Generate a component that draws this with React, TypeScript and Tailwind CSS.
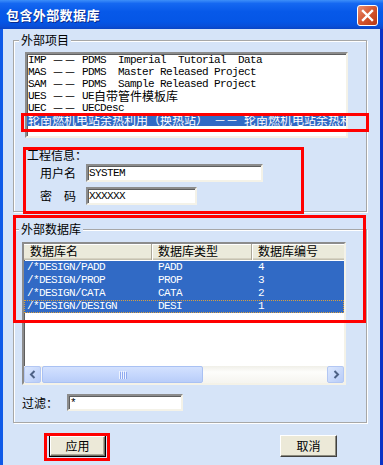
import React from 'react';

const cjk = "font-['Noto_Sans_CJK_SC','Noto_Sans',sans-serif]";
const mono = "font-['Liberation_Mono','Noto_Sans_CJK_SC',monospace] text-[11px] tracking-[-0.6px]";
const sunken =
  'border-2 border-t-[#8c8c8c] border-l-[#8c8c8c] border-b-[#f4f2e8] border-r-[#f4f2e8] shadow-[inset_1px_1px_0_#5e5e5e]';

// CJK piece inside a monospace line
const Zh = ({ children }: { children: React.ReactNode }) => (
  <span className={`${cjk} inline-block align-top h-[12px] leading-[12px] text-[12px] tracking-normal`}>
    {children}
  </span>
);

const projects: React.ReactNode[] = [
  <>IMP <Zh>－－</Zh> PDMS  Imperial  Tutorial  Data</>,
  <>MAS <Zh>－－</Zh> PDMS  Master Released Project</>,
  <>SAM <Zh>－－</Zh> PDMS  Sample Released Project</>,
  <>UES <Zh>－－</Zh> UE<Zh>自带管件模板库</Zh></>,
  <>UEC <Zh>－－</Zh> UECDesc</>,
];

const databases = [
  ['/*DESIGN/PADD', 'PADD', '4'],
  ['/*DESIGN/PROP', 'PROP', '3'],
  ['/*DESIGN/CATA', 'CATA', '2'],
  ['/*DESIGN/DESIGN', 'DESI', '1'],
];

const ScrollButton = ({ dir }: { dir: 'left' | 'right' }) => (
  <div className="w-[17px] h-[17px] shrink-0 rounded-[2px] border border-[#b3c7f3] bg-[linear-gradient(135deg,#dbe7fe,#b8ccf8)] flex items-center justify-center">
    <svg width="8" height="9" viewBox="0 0 8 9">
      <polyline
        points={dir === 'left' ? '5.5,1 2,4.5 5.5,8' : '2.5,1 6,4.5 2.5,8'}
        fill="none"
        stroke="#4d6185"
        strokeWidth="2"
      />
    </svg>
  </div>
);

export default function App() {
  return (
    <div className="relative w-[383px] h-[465px] overflow-hidden flex flex-col bg-[#d6e4f8]">
      {/* title bar */}
      <div className="h-[29px] shrink-0 flex justify-between pl-[6px] pr-[5px] bg-[linear-gradient(to_bottom,#3d8ff9_0%,#1568f1_12%,#0759e9_40%,#0556e6_75%,#094fd9_90%,#0a45c5_100%)]">
        <span
          className={`${cjk} self-center text-[13px] tracking-[0.4px] font-bold leading-[16px] text-white [text-shadow:1px_1px_0_#0b2a8c]`}
        >
          包含外部数据库
        </span>
        <div className="mt-[5px] w-[21px] h-[21px] rounded-[3px] border border-white bg-[linear-gradient(135deg,#ea8f72,#d4552f_50%,#b83812)] flex items-center justify-center">
          <svg width="13" height="13" viewBox="0 0 13 13">
            <path d="M2 2 L11 11 M11 2 L2 11" stroke="#fff" strokeWidth="2.4" strokeLinecap="square" />
          </svg>
        </div>
      </div>

      {/* body */}
      <div className="flex-1 border-l-[3px] border-r-[3px] border-l-[#0f5ae8] border-r-[#0a33c6] pt-[3px] pl-[10px] text-black">
        <fieldset className="w-[354px] h-[180px] border border-[#a7a7a7] shadow-[inset_1px_1px_0_#fff,1px_1px_0_#fff]">
          <legend className={`${cjk} ml-[5px] px-[2px] h-[16px] leading-[16px] text-[12px] bg-[#d6e4f8]`}>
            外部项目
          </legend>
          <div className="pl-[11px] pt-[4px]">
            <div className={`w-[323px] h-[86px] bg-white overflow-hidden ${sunken}`}>
              <div className={`${mono} leading-[12px]`}>
                {projects.map((p, i) => (
                  <div key={i} className="h-[12px] leading-[12px] pl-[1px] whitespace-pre overflow-hidden">
                    {p}
                  </div>
                ))}
                <div className="h-[12px] leading-[12px] pl-[1px] whitespace-pre overflow-hidden bg-[#316ac5] text-white">
                  <Zh>轮南燃机电站余热利用（换热站）</Zh> <Zh>－－</Zh> <Zh>轮南燃机电站余热利用（换热站）</Zh>
                </div>
              </div>
            </div>

            <div className={`${cjk} text-[12px] leading-[14px] mt-[10px] ml-[2px]`}>工程信息：</div>
            <div className={`${cjk} text-[12px] leading-[14px] flex items-center mt-[2px] ml-[15px]`}>
              <span className="w-[46px]">用户名</span>
              <div className={`w-[177px] h-[18px] bg-white flex items-center pl-[1px] ${sunken} ${mono}`}>SYSTEM</div>
            </div>
            <div className={`${cjk} text-[12px] leading-[14px] flex items-center mt-[5px] ml-[15px]`}>
              <span className="w-[46px] whitespace-pre">密　码</span>
              <div className={`w-[111px] h-[18px] bg-white flex items-center pl-[1px] ${sunken} ${mono}`}>XXXXXX</div>
            </div>
          </div>
        </fieldset>

        <fieldset className="mt-[9px] w-[354px] h-[202px] border border-[#a7a7a7] shadow-[inset_1px_1px_0_#fff,1px_1px_0_#fff]">
          <legend className={`${cjk} ml-[5px] px-[2px] h-[16px] leading-[16px] text-[12px] bg-[#d6e4f8]`}>
            外部数据库
          </legend>
          <div className="pl-[8px] pt-[5px]">
            <div className={`w-[324px] h-[143px] bg-white flex flex-col overflow-hidden ${sunken}`}>
              {/* header */}
              <div
                className={`${cjk} text-[12px] leading-[14px] flex h-[16px] shrink-0 bg-[#ebeadb] shadow-[inset_0_-1px_0_#c5c1b0,inset_0_-2px_0_#d6d2c2,inset_0_1px_0_#fff]`}
              >
                <div className="w-[128px] shrink-0 pl-[6px] border-r border-[#aca899]">数据库名</div>
                <div className="w-[100px] shrink-0 pl-[6px] border-r border-[#aca899] shadow-[inset_1px_0_0_#fff]">数据库类型</div>
                <div className="w-[120px] shrink-0 pl-[6px] shadow-[inset_1px_0_0_#fff]">数据库编号</div>
              </div>
              {/* rows */}
              <div className={`${mono} mt-[1px]`}>
                {databases.map((r, i) => (
                  <div
                    key={r[0]}
                    className={`flex h-[13px] leading-[13px] bg-[#316ac5] text-white ${
                      i === databases.length - 1
                        ? 'outline-1 outline-dotted outline-[#d9a03d] -outline-offset-1'
                        : ''
                    }`}
                  >
                    <div className="w-[128px] shrink-0 pl-[3px]">{r[0]}</div>
                    <div className="w-[100px] shrink-0 pl-[6px]">{r[1]}</div>
                    <div className="pl-[6px]">{r[2]}</div>
                  </div>
                ))}
              </div>
              <div className="flex-1" />
              {/* horizontal scrollbar */}
              <div className="h-[17px] shrink-0 flex bg-[linear-gradient(to_bottom,#f0efe8,#fdfdfb_35%,#f5f4ef)]">
                <ScrollButton dir="left" />
                <div className="ml-[1px] w-[161px] h-[17px] rounded-[2px] border border-[#a9c1f3] bg-[linear-gradient(to_bottom,#d3e1fe,#c3d5fc_60%,#b8ccf9)] flex items-center justify-center">
                  <svg width="8" height="8" viewBox="0 0 8 8">
                    <path d="M0.5 0 V8 M2.5 0 V8 M4.5 0 V8 M6.5 0 V8" stroke="#eef3ff" strokeWidth="1" />
                    <path d="M1.5 1 V8 M3.5 1 V8 M5.5 1 V8 M7.5 1 V8" stroke="#8faaf0" strokeWidth="1" />
                  </svg>
                </div>
                <div className="flex-1" />
                <ScrollButton dir="right" />
              </div>
            </div>

            <div className={`${cjk} text-[12px] leading-[14px] flex items-center mt-[9px]`}>
              <span className="w-[45px]">过滤：</span>
              <div className={`w-[116px] h-[17px] bg-white flex items-center pl-[1px] ${sunken} ${mono}`}>*</div>
            </div>
          </div>
        </fieldset>

        {/* buttons */}
        <div className={`${cjk} text-[12px] w-[354px] flex justify-between pl-[36px] pr-[30px] mt-[12px]`}>
          <div className="w-[57px] h-[22px] border border-black">
            <div className="w-full h-full flex items-center justify-center bg-[#ece9d8] border border-t-white border-l-white border-b-[#716f64] border-r-[#716f64] shadow-[inset_-1px_-1px_0_#aca899]">
              应用
            </div>
          </div>
          <div className="w-[57px] h-[22px] flex items-center justify-center bg-[#ece9d8] border border-t-white border-l-white border-b-[#404040] border-r-[#404040] shadow-[inset_-1px_-1px_0_#8c8a7e]">
            取消
          </div>
        </div>
      </div>

      {/* red annotation frames drawn over the dialog */}
      <div className="pointer-events-none absolute left-[21px] top-[113px] w-[348px] h-[19px] border-[3px] border-[#ff0000]" />
      <div className="pointer-events-none absolute left-[23px] top-[147px] w-[281px] h-[67px] border-[3px] border-[#ff0000]" />
      <div className="pointer-events-none absolute left-[13px] top-[215px] w-[353px] h-[108px] border-[3px] border-[#ff0000]" />
      <div className="pointer-events-none absolute left-[44px] top-[433px] w-[66px] h-[28px] border-[3px] border-[#ff0000]" />
    </div>
  );
}
